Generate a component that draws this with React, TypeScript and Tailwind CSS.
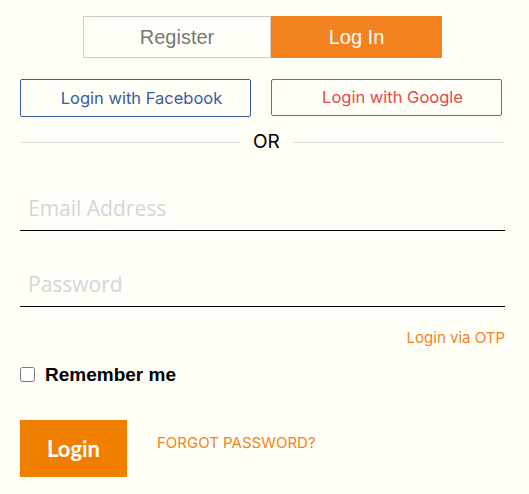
export default function App() {
  return (
    <div className="min-h-[494px] w-full bg-[#fffff8] pl-5 pr-6 pt-4 font-['Inter',sans-serif]">
      <div className="flex justify-center">
        <button
          type="button"
          className="h-[42px] w-[188px] border border-[#cccccc] font-['Liberation_Sans',sans-serif] text-[20px] text-[#777777]"
        >
          Register
        </button>
        <button
          type="button"
          className="h-[42px] w-[171px] bg-[#f58220] font-['Liberation_Sans',sans-serif] text-[20px] text-white"
        >
          Log In
        </button>
      </div>

      <div className="mt-[21px] flex gap-5">
        <button
          type="button"
          className="h-[38px] w-[231px] rounded-[2px] border border-[#3b5aa0] pl-3 text-[16.5px] text-[#3b5aa0]"
        >
          Login with Facebook
        </button>
        <button
          type="button"
          className="h-[37px] w-[231px] rounded-[2px] border border-[#e53e3e] pl-3 text-[16.5px] text-[#e5484d]"
        >
          Login with Google
        </button>
      </div>

      <div className="mt-[14px] flex items-center">
        <div className="h-px w-[220px] bg-[#e0e0e0]" />
        <span className="px-[13px] text-[19px] leading-[22px] text-black">OR</span>
        <div className="h-px flex-1 bg-[#e0e0e0]" />
      </div>

      <div className="mt-[41px] border-b border-black pb-[6px]">
        <input
          placeholder="Email Address"
          className="h-[30px] w-full bg-transparent pl-2 font-['Open_Sans',sans-serif] text-[21px] font-medium outline-none placeholder:text-[#d3d5d9]"
        />
      </div>
      <div className="mt-[39px] border-b border-black pb-[6px]">
        <input
          type="password"
          placeholder="Password"
          className="h-[30px] w-full bg-transparent pl-2 font-['Open_Sans',sans-serif] text-[21px] font-medium outline-none placeholder:text-[#d3d5d9]"
        />
      </div>

      <div className="mt-[21px] flex justify-end">
        <a className="text-[15px] leading-5 text-[#f58220]">Login via OTP</a>
      </div>

      <label className="mt-[13px] flex items-center gap-[10px]">
        <input type="checkbox" className="h-[15px] w-[15px]" />
        <span className="font-['Liberation_Sans',sans-serif] text-[19px] font-bold leading-[27px] text-black">
          Remember me
        </span>
      </label>

      <div className="mt-[32px] flex items-start gap-[30px]">
        <button
          type="button"
          className="h-[57px] w-[107px] bg-[#f07f00] font-['Lato',sans-serif] text-[22px] font-bold text-white"
        >
          Login
        </button>
        <a className="mt-[12px] text-[15px] text-[#f58220]">FORGOT PASSWORD?</a>
      </div>
    </div>
  );
}
